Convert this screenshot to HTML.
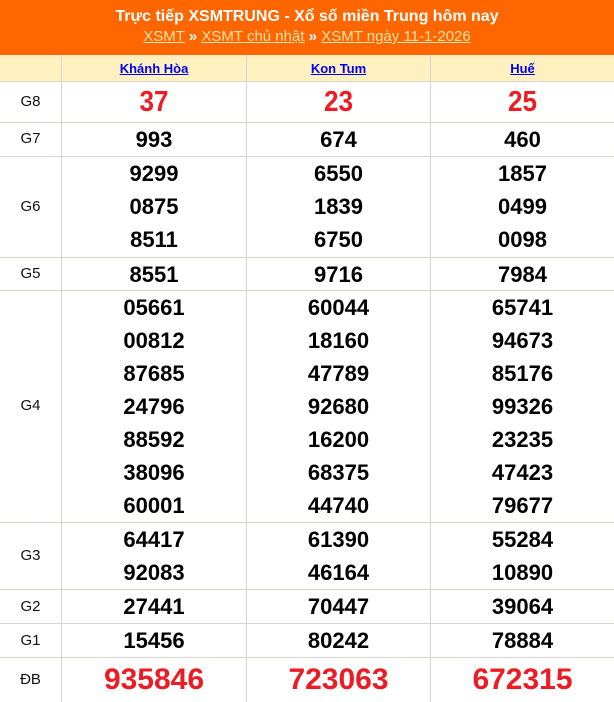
<!DOCTYPE html><html><head><meta charset="utf-8"><style>
body{margin:0;width:614px;height:702px;background:#fff;font-family:"Liberation Sans",Arial,sans-serif;position:relative;overflow:hidden}
.hd{position:absolute;left:0;top:0;width:614px;height:55px;background:#FF6600;color:#fff;text-align:center}
.t1{position:absolute;top:8px;width:100%;font-size:16px;font-weight:bold}
.t2{position:absolute;top:28px;width:100%;font-size:15px;color:#FFE3A8}
.t2 u{text-decoration:underline}
.t2 b{color:#fff;font-weight:bold}
.hr{position:absolute;left:0;top:55px;width:614px;height:26px;background:#FFF1BF}
.c{position:absolute;text-align:center}
.cn{font-size:13px;font-weight:bold;color:#0000EE;text-decoration:underline;top:61px}
.hl{position:absolute;left:0;width:614px;height:1px;background:#D9D4CC}
.vl{position:absolute;top:55px;width:1px;height:647px;background:#D9D4CC}
.lb{position:absolute;left:0;width:61px;text-align:center;font-size:15px;color:#111}
.n{position:absolute;text-align:center;font-weight:bold;font-size:22px;color:#000;line-height:33px}
.r{color:#ED1C24}
</style></head><body>
<div class="hd"><div class="t1">Trực tiếp XSMTRUNG - Xổ số miền Trung hôm nay</div>
<div class="t2"><u>XSMT</u> <b>»</b> <u>XSMT chủ nhật</u> <b>»</b> <u>XSMT ngày 11-1-2026</u></div></div>
<div class="hr"></div>
<div class="c cn" style="left:62px;width:184px">Khánh Hòa</div>
<div class="c cn" style="left:247px;width:183px">Kon Tum</div>
<div class="c cn" style="left:431px;width:183px">Huế</div>
<div class="hl" style="top:81px"></div><div class="hl" style="top:122px"></div><div class="hl" style="top:156px"></div><div class="hl" style="top:257px"></div><div class="hl" style="top:290px"></div><div class="hl" style="top:522px"></div><div class="hl" style="top:589px"></div><div class="hl" style="top:623px"></div><div class="hl" style="top:657px"></div>
<div class="vl" style="left:61px"></div><div class="vl" style="left:246px"></div><div class="vl" style="left:430px"></div>

<div class="lb" style="top:93px">G8</div>
<div class="lb" style="top:130px">G7</div>
<div class="lb" style="top:198px">G6</div>
<div class="lb" style="top:265px">G5</div>
<div class="lb" style="top:397px">G4</div>
<div class="lb" style="top:547px">G3</div>
<div class="lb" style="top:598px">G2</div>
<div class="lb" style="top:632px">G1</div>
<div class="lb" style="top:671px">ĐB</div>

<div class="n r" style="left:62px;width:184px;top:82px;line-height:40px;font-size:29px;transform:scaleX(0.9)">37</div>
<div class="n r" style="left:247px;width:183px;top:82px;line-height:40px;font-size:29px;transform:scaleX(0.9)">23</div>
<div class="n r" style="left:431px;width:183px;top:82px;line-height:40px;font-size:29px;transform:scaleX(0.9)">25</div>

<div class="n" style="left:62px;width:184px;top:123px">993</div>
<div class="n" style="left:247px;width:183px;top:123px">674</div>
<div class="n" style="left:431px;width:183px;top:123px">460</div>

<div class="n" style="left:62px;width:184px;top:157px">9299<br>0875<br>8511</div>
<div class="n" style="left:247px;width:183px;top:157px">6550<br>1839<br>6750</div>
<div class="n" style="left:431px;width:183px;top:157px">1857<br>0499<br>0098</div>

<div class="n" style="left:62px;width:184px;top:258px">8551</div>
<div class="n" style="left:247px;width:183px;top:258px">9716</div>
<div class="n" style="left:431px;width:183px;top:258px">7984</div>

<div class="n" style="left:62px;width:184px;top:291px">05661<br>00812<br>87685<br>24796<br>88592<br>38096<br>60001</div>
<div class="n" style="left:247px;width:183px;top:291px">60044<br>18160<br>47789<br>92680<br>16200<br>68375<br>44740</div>
<div class="n" style="left:431px;width:183px;top:291px">65741<br>94673<br>85176<br>99326<br>23235<br>47423<br>79677</div>

<div class="n" style="left:62px;width:184px;top:523px">64417<br>92083</div>
<div class="n" style="left:247px;width:183px;top:523px">61390<br>46164</div>
<div class="n" style="left:431px;width:183px;top:523px">55284<br>10890</div>

<div class="n" style="left:62px;width:184px;top:590px">27441</div>
<div class="n" style="left:247px;width:183px;top:590px">70447</div>
<div class="n" style="left:431px;width:183px;top:590px">39064</div>

<div class="n" style="left:62px;width:184px;top:624px">15456</div>
<div class="n" style="left:247px;width:183px;top:624px">80242</div>
<div class="n" style="left:431px;width:183px;top:624px">78884</div>

<div class="n r" style="left:62px;width:184px;top:658px;line-height:44px;font-size:30px">935846</div>
<div class="n r" style="left:247px;width:183px;top:658px;line-height:44px;font-size:30px">723063</div>
<div class="n r" style="left:431px;width:183px;top:658px;line-height:44px;font-size:30px">672315</div>
</body></html>
